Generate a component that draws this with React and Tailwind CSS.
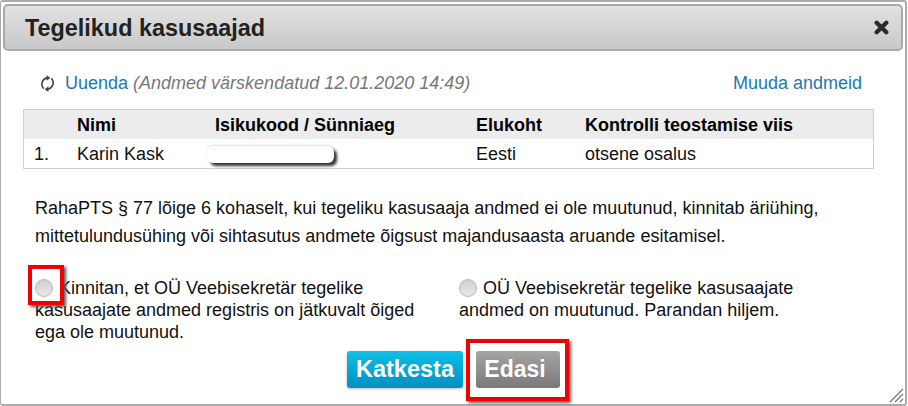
function Radio() {
  return (
    <span className="inline-block w-[18px] h-[18px] rounded-full border border-[#b8b8b8] bg-gradient-to-b from-[#cfcfcf] to-[#e8e8e8] align-[-3px] mr-[1px]" />
  );
}

function RefreshIcon() {
  return (
    <svg viewBox="0 0 16 18" className="w-[15px] h-[17px]" fill="none" stroke="#444" strokeWidth="1.7">
      <path d="M4 14.5A6.8 6.8 0 0 1 7.5 3" />
      <path d="M12 3.5A6.8 6.8 0 0 1 8.5 15" />
      <path d="M7 0 L11 3 L7 6Z" fill="#444" stroke="none" />
      <path d="M9 12 L5 15 L9 18Z" fill="#444" stroke="none" />
    </svg>
  );
}

export default function App() {
  return (
    <div className="w-[908px] h-[406px] bg-white font-['Liberation_Sans',Arial,sans-serif] text-[18px] text-[#111] overflow-hidden">
      <div className="relative h-[406px] w-[907px] border-t-2 border-r-2 border-b-2 border-l border-[#ababab] rounded-[3px] px-[2px] pt-[2px]">
        {/* Header */}
        <div className="h-[47px] rounded-[5px] border-2 border-[#a9a9a9] bg-gradient-to-b from-[#e2e2e2] to-[#c8c8c8] flex items-center justify-between pl-[20px] pr-[12px]">
          <span className="font-bold text-[23.4px] text-[#222] pt-[2px]">Tegelikud kasusaajad</span>
          <svg viewBox="0 0 14 14" className="w-[15px] h-[15px]" stroke="#2b2b2b" strokeWidth="4" strokeLinecap="round">
            <path d="M2.5 2.5 L11.5 11.5 M11.5 2.5 L2.5 11.5" />
          </svg>
        </div>

        {/* Toolbar */}
        <div className="flex items-center justify-between mt-[20px] pl-[37px] pr-[41px] h-[24px]">
          <div className="flex items-center gap-[10px]">
            <RefreshIcon />
            <span className="text-[#1f77ad]">
              Uuenda <i className="text-[#777]">(Andmed värskendatud 12.01.2020 14:49)</i>
            </span>
          </div>
          <a className="text-[#1f77ad]">Muuda andmeid</a>
        </div>

        {/* Table */}
        <div className="mt-[14px] ml-[20px] w-[851px] border border-[#cfcfcf]">
          <div className="flex h-[29px] items-center bg-[#ececec] font-bold text-black pt-[1px]">
            <div className="w-[53px]" />
            <div className="w-[138px]">Nimi</div>
            <div className="w-[261px]">Isikukood / Sünniaeg</div>
            <div className="w-[109px]">Elukoht</div>
            <div>Kontrolli teostamise viis</div>
          </div>
          <div className="flex h-[29px] items-center pt-[1px]">
            <div className="w-[53px] pl-[10px]">1.</div>
            <div className="w-[138px]">Karin Kask</div>
            <div className="w-[261px]">
              <div className="ml-[-8px] w-[127px] h-[17px] rounded-[6px] bg-white shadow-[3px_3px_3px_#333,0_-1px_2px_#ddd]" />
            </div>
            <div className="w-[109px]">Eesti</div>
            <div>otsene osalus</div>
          </div>
        </div>

        {/* Legal text */}
        <p className="mt-[25px] ml-[32px] mr-[40px] leading-[28px]">
          RahaPTS § 77 lõige 6 kohaselt, kui tegeliku kasusaaja andmed ei ole muutunud, kinnitab äriühing,
          <br />
          mittetulundusühing või sihtasutus andmete õigsust majandusaasta aruande esitamisel.
        </p>

        {/* Options */}
        <div className="flex mt-[27px] ml-[32px] leading-[22px]">
          <div className="relative w-[424px] pr-[30px]">
            <Radio />
            {' '}Kinnitan, et OÜ Veebisekretär tegelike kasusaajate andmed registris on jätkuvalt õiged ega ole muutunud.
            <span className="absolute left-[-7px] top-[-12px] w-[36px] h-[40px] border-[4px] border-[#f00000] shadow-[2px_2px_3px_#555]" />
          </div>
          <div className="w-[370px]">
            <Radio />
            {' '}OÜ Veebisekretär tegelike kasusaajate andmed on muutunud. Parandan hiljem.
          </div>
        </div>

        {/* Buttons */}
        <div className="flex justify-center gap-[13px] mt-[8px] pl-[1px]">
          <button className="w-[116px] h-[37px] rounded-[3px] bg-gradient-to-b from-[#0fc0e4] to-[#0090c4] text-white font-bold text-[23.5px] shadow-[0_1px_3px_#bbb]">Katkesta</button>
          <button className="w-[84px] h-[37px] rounded-[3px] bg-gradient-to-b from-[#a5a5a5] to-[#797979] text-white font-bold text-[23px] pr-[6px]">Edasi</button>
        </div>
        <span className="absolute left-[465px] top-[337px] w-[103px] h-[62px] border-[4px] border-[#f00000] shadow-[2px_2px_3px_#555] pointer-events-none" />

        {/* Resize grip */}
        <svg viewBox="0 0 16 16" className="absolute right-[1px] bottom-[1px] w-[16px] h-[16px]" stroke="#777" strokeWidth="1.3">
          <path d="M2 15 L15 2 M7 15 L15 7 M12 15 L15 12" />
        </svg>
      </div>
    </div>
  );
}
